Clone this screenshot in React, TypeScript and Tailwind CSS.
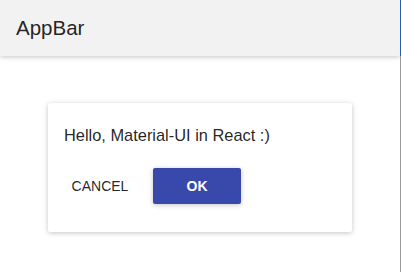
export default function App() {
  return (
    <div className="relative h-[272px] w-[401px] overflow-hidden bg-white font-['Liberation_Sans',Arial,sans-serif] text-[rgba(0,0,0,0.87)]">
      <header className="flex h-14 w-[400px] items-center bg-[#f2f2f2] px-4 shadow-[0_1px_6px_rgba(0,0,0,0.12),0_1px_4px_rgba(0,0,0,0.12)]">
        <h1 className="text-[20.5px] font-normal">AppBar</h1>
      </header>
      <div className="absolute right-0 top-0 flex h-full w-px flex-col">
        <div className="h-14 bg-[#1b62b5]" />
        <div className="flex-1 bg-[#9a9a9a]" />
      </div>

      <div className="mx-12 mt-[47px] h-[129px] w-[304px] rounded-[2px] bg-white shadow-[0_1px_6px_rgba(0,0,0,0.12),0_1px_4px_rgba(0,0,0,0.12)]">
        <p className="px-4 pt-[20px] text-[16.4px] leading-6">Hello, Material-UI in React :)</p>
        <div className="mt-[21px] flex items-center pl-2">
          <button className="h-9 w-[88px] text-[14px] uppercase">Cancel</button>
          <button className="ml-[9px] h-9 w-[88px] rounded-[2px] bg-[#3949ab] text-[14px] font-bold text-white shadow-[0_1px_6px_rgba(0,0,0,0.12),0_1px_4px_rgba(0,0,0,0.12)]">
            OK
          </button>
        </div>
      </div>
    </div>
  );
}
